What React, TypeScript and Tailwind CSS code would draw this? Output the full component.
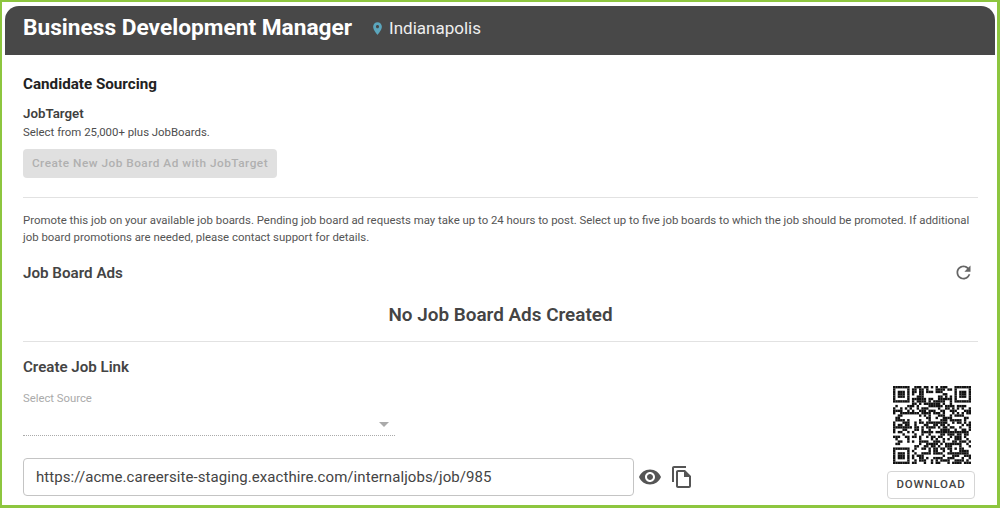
import React from 'react';

// 33 x 33 modules, finder squares in three corners and the rest scattered
const QR_SIZE = 33;

const inFinder = (x: number, y: number) =>
  (x < 8 && y < 8) || (x >= QR_SIZE - 8 && y < 8) || (x < 8 && y >= QR_SIZE - 8);

const finderCell = (x: number, y: number) => {
  const fx = x < 8 ? x : x - (QR_SIZE - 7);
  const fy = y < 8 ? y : y - (QR_SIZE - 7);
  if (fx < 0 || fy < 0 || fx > 6 || fy > 6) return false;
  if (fx === 0 || fx === 6 || fy === 0 || fy === 6) return true;
  return fx >= 2 && fx <= 4 && fy >= 2 && fy <= 4;
};

const qrCell = (x: number, y: number) => {
  if (inFinder(x, y)) return finderCell(x, y);
  const ax = x - 26;
  const ay = y - 26;
  if (Math.abs(ax) <= 2 && Math.abs(ay) <= 2) return Math.max(Math.abs(ax), Math.abs(ay)) !== 1;
  const n = Math.sin(x * 12.9898 + y * 78.233) * 43758.5453;
  return n - Math.floor(n) > 0.5;
};

const QR_CELLS = Array.from({ length: QR_SIZE * QR_SIZE }, (_, i) => ({
  x: i % QR_SIZE,
  y: Math.floor(i / QR_SIZE),
})).filter((c) => qrCell(c.x, c.y));

const App: React.FC = () => {
  return (
    <div className="h-[508px] w-[1000px] overflow-hidden border-t-[2px] border-r-[3px] border-b-[3px] border-l-[2px] border-[#8dc63f] bg-white pt-[4px] pr-[2px] pl-[3px] font-['Roboto',sans-serif]">
      {/* Header */}
      <div className="flex h-[49px] items-center rounded-t-[14px] bg-[#484848] pb-[4px] pl-[18px]">
        <h1 className="text-[22.7px] font-bold text-white">Business Development Manager</h1>
        <svg viewBox="0 0 24 24" className="ml-[18px] h-[15px] w-[15px]" fill="#5ba6bd">
          <path d="M12 2C8.13 2 5 5.13 5 9c0 5.25 7 13 7 13s7-7.75 7-13c0-3.87-3.13-7-7-7zm0 9.5c-1.38 0-2.5-1.12-2.5-2.5s1.12-2.5 2.5-2.5 2.5 1.12 2.5 2.5-1.12 2.5-2.5 2.5z" />
        </svg>
        <span className="ml-[4px] text-[17px] text-[#eeeeee]">Indianapolis</span>
      </div>

      <div className="pr-[17px] pl-[18px]">
        {/* Candidate Sourcing */}
        <h2 className="mt-[19px] text-[15.2px] leading-[20px] font-bold text-[#222222]">Candidate Sourcing</h2>
        <h3 className="mt-[11px] text-[13.3px] leading-[18px] font-semibold text-[#3f3f3f]">JobTarget</h3>
        <p className="mt-[1px] text-[11.4px] leading-[16px] text-[#4d4d4d]">Select from 25,000+ plus JobBoards.</p>
        <button className="mt-[9px] block h-[29px] w-[254px] rounded-[4px] bg-[#e0e0e0] text-[11.8px] font-medium tracking-[0.5px] text-[#b0b0b0]">
          Create New Job Board Ad with JobTarget
        </button>
        <hr className="mt-[19px] border-[#e2e2e2]" />

        {/* Promote text */}
        <p className="mt-[14px] text-[11.4px] leading-[17px] text-[#555555]">
          Promote this job on your available job boards. Pending job board ad requests may take up to 24 hours to post. Select up to five job boards to which the job should be promoted. If additional job board promotions are needed, please contact support for details.
        </p>

        {/* Job Board Ads */}
        <div className="mt-[16px] flex items-center justify-between">
          <h2 className="text-[15.2px] leading-[20px] font-semibold text-[#444444]">Job Board Ads</h2>
          <svg viewBox="0 0 24 24" className="mr-[4px] h-[21px] w-[21px]" fill="#666666">
            <path d="M17.65 6.35C16.2 4.9 14.21 4 12 4c-4.42 0-7.99 3.58-7.99 8s3.57 8 7.99 8c3.73 0 6.84-2.55 7.73-6h-2.08c-.82 2.33-3.04 4-5.65 4-3.31 0-6-2.69-6-6s2.69-6 6-6c1.66 0 3.14.69 4.22 1.78L13 11h7V4l-2.35 2.35z" />
          </svg>
        </div>
        <div className="mt-[21px] text-center text-[18.9px] leading-[22px] font-semibold text-[#444444]">No Job Board Ads Created</div>
        <hr className="mt-[15px] border-[#e2e2e2]" />

        {/* Create Job Link */}
        <div className="flex justify-between">
          <div className="w-[700px]">
            <h2 className="mt-[15px] text-[15.1px] leading-[20px] font-semibold text-[#444444]">Create Job Link</h2>
            <div className="mt-[15px] text-[11.3px] leading-[14px] text-[#aaaaaa]">Select Source</div>
            <div className="relative h-[30px] w-[372px] border-b border-dotted border-[#aaaaaa]">
              <div className="absolute top-[16px] right-[6px] h-0 w-0 border-x-[5px] border-t-[5px] border-x-transparent border-t-[#aaaaaa]"></div>
            </div>
            <div className="mt-[22px] flex items-center">
              <div className="flex h-[38px] w-[611px] items-center rounded-[4px] border border-[#c4c4c4] pl-[12px] text-[15px] tracking-[0.07px] text-[#444444]">
                https://acme.careersite-staging.exacthire.com/internaljobs/job/985
              </div>
              <svg viewBox="0 0 24 24" className="ml-[4px] h-[24px] w-[24px]" fill="#555555">
                <path d="M12 4.5C7 4.5 2.73 7.61 1 12c1.73 4.39 6 7.5 11 7.5s9.27-3.11 11-7.5c-1.73-4.39-6-7.5-11-7.5zM12 17c-2.76 0-5-2.24-5-5s2.24-5 5-5 5 2.24 5 5-2.24 5-5 5zm0-8c-1.66 0-3 1.34-3 3s1.34 3 3 3 3-1.34 3-3-1.34-3-3-3z" />
              </svg>
              <svg viewBox="0 0 24 24" className="ml-[8px] h-[24px] w-[24px]" fill="#555555">
                <path d="M16 1H4c-1.1 0-2 .9-2 2v14h2V3h12V1zm-1 4H8c-1.1 0-1.99.9-1.99 2L6 21c0 1.1.89 2 1.99 2H19c1.1 0 2-.9 2-2V11l-6-6zM8 21V7h6v5h5v9H8z" />
              </svg>
            </div>
          </div>
          <div className="mt-[44px] mr-[3px] flex w-[88px] flex-col items-center">
            <svg viewBox={`0 0 ${QR_SIZE} ${QR_SIZE}`} className="ml-[1px] h-[78px] w-[78px] shrink-0">
              {QR_CELLS.map((c) => (
                <rect key={`${c.x}-${c.y}`} x={c.x} y={c.y} width="1.02" height="1.02" fill="#111111" />
              ))}
            </svg>
            <button className="mt-[7px] h-[28px] w-[88px] shrink-0 rounded-[4px] border border-[#d5d5d5] text-[11.5px] font-medium tracking-[0.8px] text-[#444444]">
              DOWNLOAD
            </button>
          </div>
        </div>
      </div>
    </div>
  );
};

export default App;
